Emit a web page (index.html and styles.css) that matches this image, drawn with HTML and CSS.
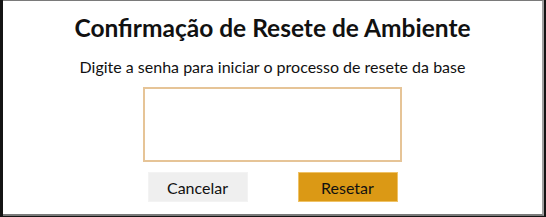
FILE: index.html
```html
<!DOCTYPE html>
<html lang="pt">
<head>
<meta charset="utf-8">
<link rel="stylesheet" href="styles.css">
</head>
<body>
<div class="dialog">
  <h1 class="title">Confirmação de Resete de Ambiente</h1>
  <p class="subtitle">Digite a senha para iniciar o processo de resete da base</p>
  <textarea class="password"></textarea>
  <div class="actions">
    <button class="btn btn-cancel">Cancelar</button>
    <button class="btn btn-reset">Resetar</button>
  </div>
</div>
</body>
</html>
```

FILE: styles.css
```css
html, body {
  margin: 0;
  padding: 0;
  background: #141414;
  width: 546px;
  height: 217px;
  overflow: hidden;
}
.dialog {
  box-sizing: border-box;
  margin-left: 3px;
  width: 541px;
  height: 216px;
  background: #fff;
  border-top: 1px solid #7a7a7a;
  border-right: 2px solid #a0a0a0;
  border-bottom: 2px solid #7a7a7a;
  display: flex;
  flex-direction: column;
  align-items: center;
  font-family: Lato, "Noto Sans", sans-serif;
  color: #111;
}
.title {
  margin: 12px 0 0;
  font-size: 24.5px;
  font-weight: 700;
  line-height: 30px;
}
.subtitle {
  margin: 14px 0 0;
  font-size: 16px;
  line-height: 20px;
}
.password {
  box-sizing: border-box;
  margin-top: 10px;
  width: 259px;
  height: 75px;
  border: 2px solid #e6c497;
  outline: none;
  resize: none;
  padding: 0;
  background: #fff;
}
.actions {
  margin-top: 10px;
  width: 250px;
  display: flex;
  justify-content: space-between;
}
.btn {
  box-sizing: border-box;
  width: 100px;
  height: 30px;
  font-family: inherit;
  font-size: 16px;
  color: #111;
  padding: 0;
  cursor: pointer;
}
.btn-cancel {
  background: #efefef;
  border: 1px solid #f3f3f3;
}
.btn-reset {
  background: #db9915;
  border: 1px solid #efc266;
}
```
